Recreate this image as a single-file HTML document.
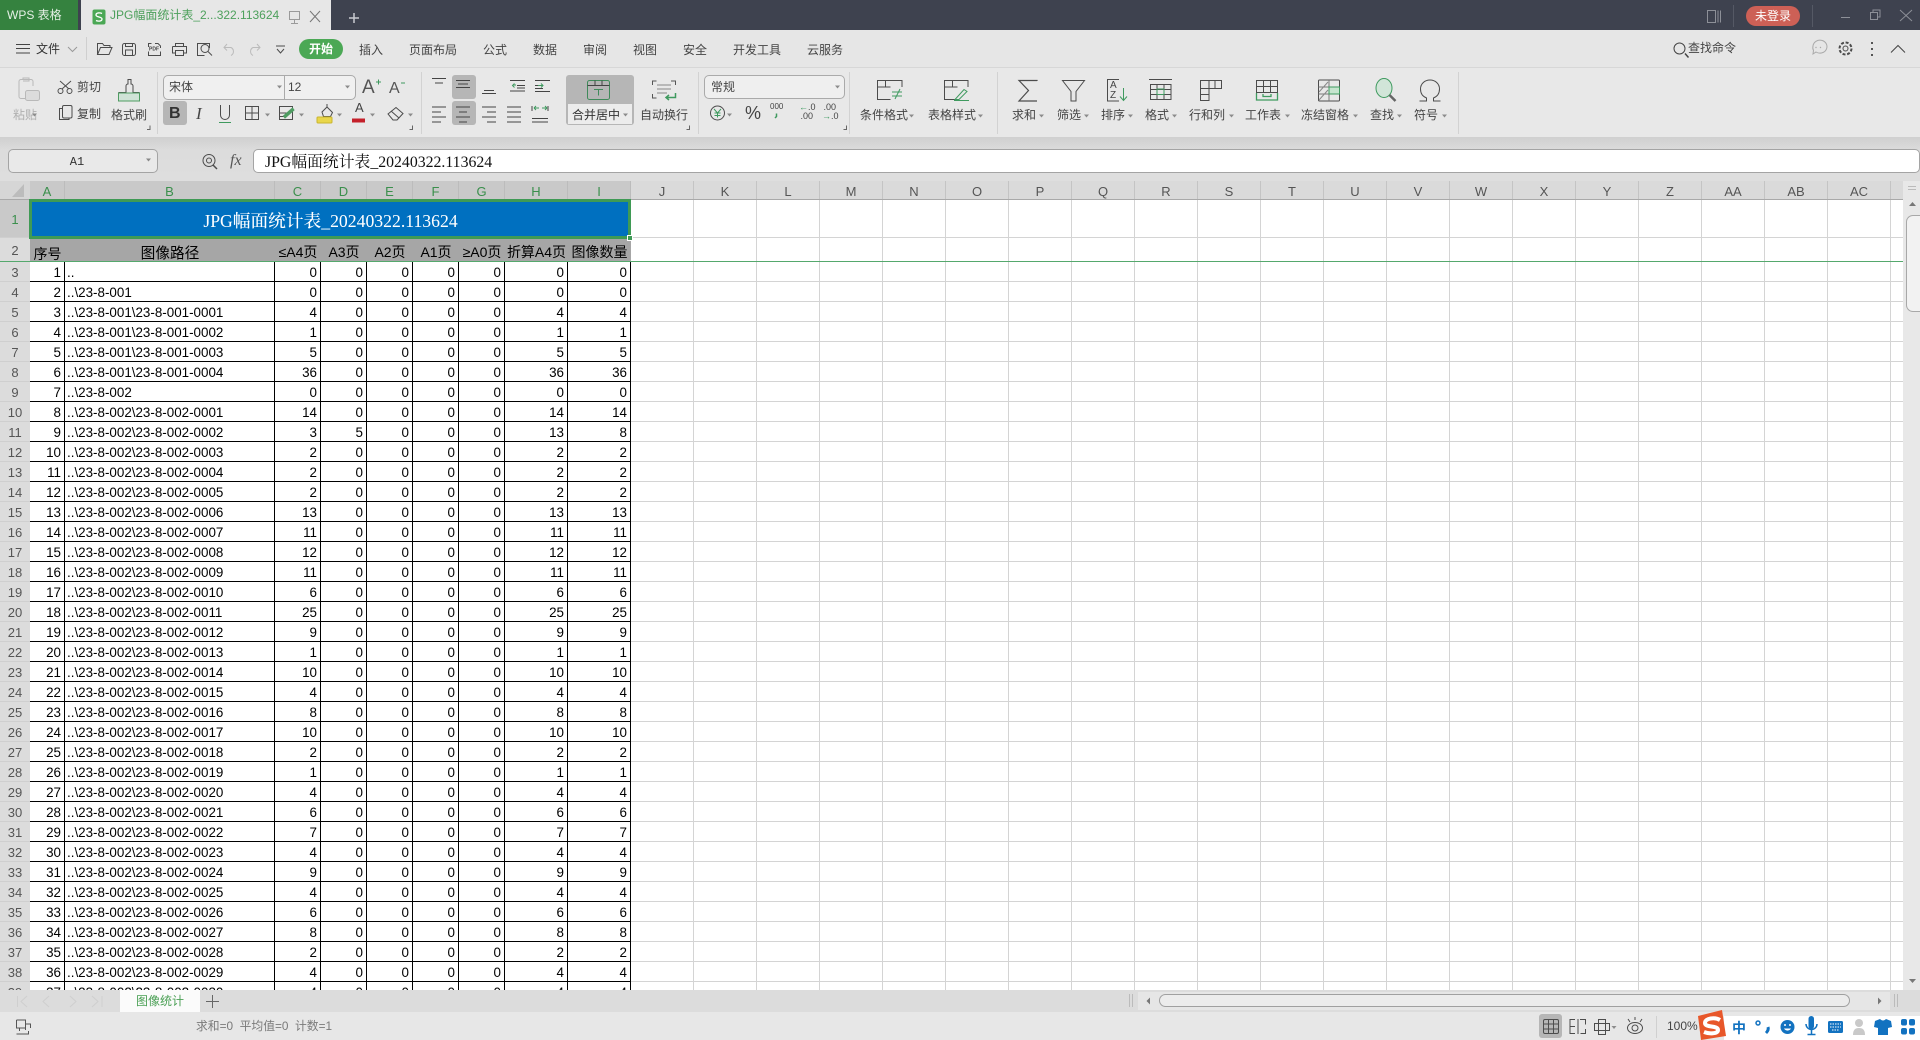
<!DOCTYPE html>
<html lang="zh"><head><meta charset="utf-8"><title>WPS 表格</title>
<style>
html,body{margin:0;padding:0;width:1920px;height:1040px;overflow:hidden;background:#e6e6e6}
body{position:relative;font-family:"Liberation Sans","Noto Sans CJK SC",sans-serif}
div.a,.t{position:absolute}
.t{font-size:12px;line-height:16px;white-space:nowrap;color:#444}
.g{color:#aaa}
svg#ic{position:absolute;left:0;top:0;z-index:20;pointer-events:none}
#sheet{position:absolute;left:0;top:181px;width:1903px;height:809px;overflow:hidden;background:#fff}
#chead{position:absolute;left:30px;top:0;height:18px;display:flex;font-size:13px;line-height:22px;text-align:center;color:#555}
#chead span{display:block;box-sizing:border-box;width:63px;background:#dadada;border-right:1px solid #c4c4c4;height:18px}
#chead span.s{background:#c9c9c9;color:#3a8f4c;border-right:1px solid #bcbcbc}
#rhead{position:absolute;left:0;top:19px;width:30px;font-size:13px;text-align:center;color:#555;background:#dcdcdc}
#rhead div{height:19px;line-height:21px;border-bottom:1px solid #cfcfcf;box-sizing:content-box;overflow:hidden}
table{position:absolute;left:30px;top:81px;border-collapse:separate;border-spacing:0;table-layout:fixed;width:601px;font-size:13.4px;color:#000;background:#fff}
td{box-sizing:content-box;border-right:1px solid #000;border-bottom:1px solid #000;height:16px;line-height:16px;padding:3px 3px 0 0;text-align:right;overflow:hidden;white-space:nowrap}
td:nth-child(2){text-align:left;padding:3px 0 0 2px}
.h{position:absolute;top:57px;height:24px;line-height:29px;text-align:center;font-size:14px;color:#000;white-space:nowrap;overflow:hidden}
</style></head><body>

<!-- title bar -->
<div class="a" style="left:0;top:0;width:1920px;height:37px;background:#3e424f"></div>
<div class="a" style="left:0;top:0;width:78px;height:30px;background:#35823f"></div>
<div class="a" style="left:81px;top:0;width:250px;height:30px;background:#e7e7e7"></div>
<div class="a" style="left:0;top:30px;width:1920px;height:38px;background:#e6e6e6;border-bottom:1px solid #d7d7d7;box-sizing:border-box"></div>
<div class="t" style="left:7px;top:7px;color:#e6f0e6;font-size:12px">WPS 表格</div>
<div class="t" style="left:110px;top:7px;color:#4da05c">JPG幅面统计表_2...322.113624</div>
<div class="a" style="left:1746px;top:6px;width:54px;height:20px;border-radius:10px;background:#cd6056;color:#fff;font-size:12px;line-height:20px;text-align:center">未登录</div>

<!-- menu row -->
<div class="t" style="left:36px;top:41px;font-size:12px;color:#333">文件</div>
<div class="a" style="left:299px;top:39px;width:44px;height:20px;border-radius:10px;background:#4ba855;color:#fff;font-size:12px;line-height:20px;text-align:center;font-weight:bold">开始</div>
<div class="t" style="left:359px;top:42px">插入</div>
<div class="t" style="left:409px;top:42px">页面布局</div>
<div class="t" style="left:483px;top:42px">公式</div>
<div class="t" style="left:533px;top:42px">数据</div>
<div class="t" style="left:583px;top:42px">审阅</div>
<div class="t" style="left:633px;top:42px">视图</div>
<div class="t" style="left:683px;top:42px">安全</div>
<div class="t" style="left:733px;top:42px">开发工具</div>
<div class="t" style="left:807px;top:42px">云服务</div>
<div class="t" style="left:1688px;top:40px">查找命令</div>

<!-- ribbon -->
<div class="a" style="left:0;top:68px;width:1920px;height:69px;background:#e8e8e8"></div>
<div class="a" style="left:0;top:137px;width:1920px;height:44px;background:linear-gradient(#cfcfcf,#dcdcdc 30%,#dedede)"></div>
<!-- comboboxes -->
<div class="a" style="left:163px;top:75px;width:191px;height:23px;border:1px solid #aaa;border-radius:5px;background:#f0f0f0"></div>
<div class="a" style="left:284px;top:75px;width:1px;height:25px;background:#aaa"></div>
<div class="t" style="left:169px;top:79px;color:#444">宋体</div>
<div class="t" style="left:288px;top:79px;color:#444">12</div>
<div class="a" style="left:704px;top:75px;width:139px;height:22px;border:1px solid #aaa;border-radius:5px;background:#efefef"></div>
<div class="t" style="left:711px;top:79px;color:#444">常规</div>
<!-- highlighted buttons -->
<div class="a" style="left:163px;top:101px;width:24px;height:24px;border-radius:3px;background:#b6b6b6"></div>
<div class="a" style="left:452px;top:75px;width:24px;height:24px;border-radius:3px;background:#b6b6b6"></div>
<div class="a" style="left:452px;top:101px;width:24px;height:24px;border-radius:3px;background:#b6b6b6"></div>
<div class="a" style="left:566px;top:75px;width:68px;height:50px;border-radius:3px;background:#b6b6b6"></div>
<div class="a" style="left:568px;top:104px;width:64px;height:20px;background:#ececec"></div>
<div class="t" style="left:13px;top:107px;color:#b0b0b0">粘贴</div>
<div class="t" style="left:77px;top:79px">剪切</div>
<div class="t" style="left:77px;top:106px">复制</div>
<div class="t" style="left:111px;top:107px">格式刷</div>
<div class="t" style="left:169px;top:104px;font-size:16px;line-height:20px;font-weight:bold;color:#333">B</div>
<div class="t" style="left:196px;top:104px;font-family:'Liberation Serif',serif;font-style:italic;font-size:17px;line-height:20px;color:#444">I</div>
<div class="t" style="left:572px;top:107px;color:#333">合并居中</div>
<div class="t" style="left:640px;top:107px">自动换行</div>
<div class="t" style="left:860px;top:107px">条件格式</div>
<div class="t" style="left:928px;top:107px">表格样式</div>
<div class="t" style="left:1012px;top:107px">求和</div>
<div class="t" style="left:1057px;top:107px">筛选</div>
<div class="t" style="left:1101px;top:107px">排序</div>
<div class="t" style="left:1145px;top:107px">格式</div>
<div class="t" style="left:1189px;top:107px">行和列</div>
<div class="t" style="left:1245px;top:107px">工作表</div>
<div class="t" style="left:1301px;top:107px">冻结窗格</div>
<div class="t" style="left:1370px;top:107px">查找</div>
<div class="t" style="left:1414px;top:107px">符号</div>
<div class="t" style="left:362px;top:78px;font-size:19px;line-height:20px;color:#555">A</div>
<div class="t" style="left:389px;top:80px;font-size:16px;line-height:18px;color:#555">A</div>
<div class="t" style="left:355px;top:100px;font-size:13px;color:#444">A</div>
<div class="t" style="left:745px;top:103px;font-size:18px;line-height:20px;color:#444">%</div>
<div class="t" style="left:770px;top:102px;font-size:8px;line-height:10px;color:#444">000</div>
<div class="t" style="left:799px;top:103px;font-size:9px;line-height:9px;color:#444;text-align:right;width:14px"><span style="color:#3f9a5f">←</span>.0<br>.00</div>
<div class="t" style="left:822px;top:103px;font-size:9px;line-height:9px;color:#444;text-align:right;width:14px">.00<br><span style="color:#3f9a5f">→</span>.0</div>
<div class="t" style="left:1110px;top:81px;font-size:10px;line-height:10px;color:#444">A<br>Z</div>

<!-- formula bar -->
<div class="a" style="left:8px;top:149px;width:136px;height:22px;border:1px solid #a4a4a4;border-radius:5px;background:#e9e9e9;font-family:'Liberation Mono','Noto Sans CJK SC',monospace;font-size:12px;line-height:25px;text-align:center;color:#333;padding-right:12px">A1</div>
<div class="a" style="left:253px;top:149px;width:1665px;height:22px;border:1px solid #a4a4a4;border-radius:5px;background:#fff"></div>
<div class="t" style="left:265px;top:154px;font-family:'Liberation Serif','Noto Serif CJK SC',serif;font-size:15.8px;line-height:18px;color:#111">JPG幅面统计表_20240322.113624</div>
<div class="t" style="left:230px;top:152px;font-family:'Liberation Serif',serif;font-style:italic;font-size:16px;line-height:18px;color:#555">fx</div>

<!-- sheet -->
<div id="sheet">
  <div class="a" style="left:0;top:0;width:1903px;height:19px;background:#dadada;border-bottom:1px solid #a9a9a9;box-sizing:border-box"></div>
  <div class="a" style="left:0;top:0;width:30px;height:18px;background:#d6d6d6"></div>
  <div id="chead">
    <span class="s" style="width:35px">A</span><span class="s" style="width:210px">B</span><span class="s" style="width:46px">C</span><span class="s" style="width:46px">D</span><span class="s" style="width:46px">E</span><span class="s" style="width:46px">F</span><span class="s" style="width:46px">G</span><span class="s" style="width:63px">H</span><span class="s" style="width:63px">I</span><span>J</span><span>K</span><span>L</span><span>M</span><span>N</span><span>O</span><span>P</span><span>Q</span><span>R</span><span>S</span><span>T</span><span>U</span><span>V</span><span>W</span><span>X</span><span>Y</span><span>Z</span><span>AA</span><span>AB</span><span>AC</span>
  </div>
  <!-- grid on the right -->
  <div class="a" style="left:631px;top:19px;width:1272px;height:790px;background-image:repeating-linear-gradient(90deg,transparent 0 62px,#d4d4d4 62px 63px)"></div>
  <div class="a" style="left:631px;top:81px;width:1272px;height:728px;background-image:repeating-linear-gradient(180deg,transparent 0 19px,#d4d4d4 19px 20px)"></div>
  <div class="a" style="left:631px;top:56px;width:1272px;height:1px;background:#d4d4d4"></div>
  <!-- row headers -->
  <div id="rhead">
    <div style="height:37px;line-height:40px;background:#c9c9c9;color:#3a8f4c">1</div><div style="height:23px;line-height:26px">2</div><div>3</div><div>4</div><div>5</div><div>6</div><div>7</div><div>8</div><div>9</div><div>10</div><div>11</div><div>12</div><div>13</div><div>14</div><div>15</div><div>16</div><div>17</div><div>18</div><div>19</div><div>20</div><div>21</div><div>22</div><div>23</div><div>24</div><div>25</div><div>26</div><div>27</div><div>28</div><div>29</div><div>30</div><div>31</div><div>32</div><div>33</div><div>34</div><div>35</div><div>36</div><div>37</div><div>38</div><div>39</div>
  </div>
  <!-- title cell and header -->
  <div class="a" style="left:30px;top:19px;width:601px;height:38px;background:#0070c0;color:#fff;font-family:'Liberation Serif','Noto Serif CJK SC',serif;font-size:17.7px;line-height:43px;text-align:center;font-weight:500">JPG幅面统计表_20240322.113624</div>
  <div class="a" style="left:30px;top:57px;width:601px;height:24px;background:#a6a6a6"></div>
  <div class="h" style="left:30px;width:35px;line-height:32px">序号</div>
  <div class="h" style="left:65px;width:210px;font-size:14.67px;line-height:32px">图像路径</div>
  <div class="h" style="left:275px;width:46px">≤A4页</div>
  <div class="h" style="left:321px;width:46px">A3页</div>
  <div class="h" style="left:367px;width:46px">A2页</div>
  <div class="h" style="left:413px;width:46px">A1页</div>
  <div class="h" style="left:459px;width:46px">≥A0页</div>
  <div class="h" style="left:505px;width:63px">折算A4页</div>
  <div class="h" style="left:568px;width:63px">图像数量</div>
  <table>
  <colgroup><col style="width:35px"><col style="width:210px"><col style="width:46px"><col style="width:46px"><col style="width:46px"><col style="width:46px"><col style="width:46px"><col style="width:63px"><col style="width:63px"></colgroup>
  <tr><td>1</td><td>..</td><td>0</td><td>0</td><td>0</td><td>0</td><td>0</td><td>0</td><td>0</td></tr>
  <tr><td>2</td><td>..\23-8-001</td><td>0</td><td>0</td><td>0</td><td>0</td><td>0</td><td>0</td><td>0</td></tr>
  <tr><td>3</td><td>..\23-8-001\23-8-001-0001</td><td>4</td><td>0</td><td>0</td><td>0</td><td>0</td><td>4</td><td>4</td></tr>
  <tr><td>4</td><td>..\23-8-001\23-8-001-0002</td><td>1</td><td>0</td><td>0</td><td>0</td><td>0</td><td>1</td><td>1</td></tr>
  <tr><td>5</td><td>..\23-8-001\23-8-001-0003</td><td>5</td><td>0</td><td>0</td><td>0</td><td>0</td><td>5</td><td>5</td></tr>
  <tr><td>6</td><td>..\23-8-001\23-8-001-0004</td><td>36</td><td>0</td><td>0</td><td>0</td><td>0</td><td>36</td><td>36</td></tr>
  <tr><td>7</td><td>..\23-8-002</td><td>0</td><td>0</td><td>0</td><td>0</td><td>0</td><td>0</td><td>0</td></tr>
  <tr><td>8</td><td>..\23-8-002\23-8-002-0001</td><td>14</td><td>0</td><td>0</td><td>0</td><td>0</td><td>14</td><td>14</td></tr>
  <tr><td>9</td><td>..\23-8-002\23-8-002-0002</td><td>3</td><td>5</td><td>0</td><td>0</td><td>0</td><td>13</td><td>8</td></tr>
  <tr><td>10</td><td>..\23-8-002\23-8-002-0003</td><td>2</td><td>0</td><td>0</td><td>0</td><td>0</td><td>2</td><td>2</td></tr>
  <tr><td>11</td><td>..\23-8-002\23-8-002-0004</td><td>2</td><td>0</td><td>0</td><td>0</td><td>0</td><td>2</td><td>2</td></tr>
  <tr><td>12</td><td>..\23-8-002\23-8-002-0005</td><td>2</td><td>0</td><td>0</td><td>0</td><td>0</td><td>2</td><td>2</td></tr>
  <tr><td>13</td><td>..\23-8-002\23-8-002-0006</td><td>13</td><td>0</td><td>0</td><td>0</td><td>0</td><td>13</td><td>13</td></tr>
  <tr><td>14</td><td>..\23-8-002\23-8-002-0007</td><td>11</td><td>0</td><td>0</td><td>0</td><td>0</td><td>11</td><td>11</td></tr>
  <tr><td>15</td><td>..\23-8-002\23-8-002-0008</td><td>12</td><td>0</td><td>0</td><td>0</td><td>0</td><td>12</td><td>12</td></tr>
  <tr><td>16</td><td>..\23-8-002\23-8-002-0009</td><td>11</td><td>0</td><td>0</td><td>0</td><td>0</td><td>11</td><td>11</td></tr>
  <tr><td>17</td><td>..\23-8-002\23-8-002-0010</td><td>6</td><td>0</td><td>0</td><td>0</td><td>0</td><td>6</td><td>6</td></tr>
  <tr><td>18</td><td>..\23-8-002\23-8-002-0011</td><td>25</td><td>0</td><td>0</td><td>0</td><td>0</td><td>25</td><td>25</td></tr>
  <tr><td>19</td><td>..\23-8-002\23-8-002-0012</td><td>9</td><td>0</td><td>0</td><td>0</td><td>0</td><td>9</td><td>9</td></tr>
  <tr><td>20</td><td>..\23-8-002\23-8-002-0013</td><td>1</td><td>0</td><td>0</td><td>0</td><td>0</td><td>1</td><td>1</td></tr>
  <tr><td>21</td><td>..\23-8-002\23-8-002-0014</td><td>10</td><td>0</td><td>0</td><td>0</td><td>0</td><td>10</td><td>10</td></tr>
  <tr><td>22</td><td>..\23-8-002\23-8-002-0015</td><td>4</td><td>0</td><td>0</td><td>0</td><td>0</td><td>4</td><td>4</td></tr>
  <tr><td>23</td><td>..\23-8-002\23-8-002-0016</td><td>8</td><td>0</td><td>0</td><td>0</td><td>0</td><td>8</td><td>8</td></tr>
  <tr><td>24</td><td>..\23-8-002\23-8-002-0017</td><td>10</td><td>0</td><td>0</td><td>0</td><td>0</td><td>10</td><td>10</td></tr>
  <tr><td>25</td><td>..\23-8-002\23-8-002-0018</td><td>2</td><td>0</td><td>0</td><td>0</td><td>0</td><td>2</td><td>2</td></tr>
  <tr><td>26</td><td>..\23-8-002\23-8-002-0019</td><td>1</td><td>0</td><td>0</td><td>0</td><td>0</td><td>1</td><td>1</td></tr>
  <tr><td>27</td><td>..\23-8-002\23-8-002-0020</td><td>4</td><td>0</td><td>0</td><td>0</td><td>0</td><td>4</td><td>4</td></tr>
  <tr><td>28</td><td>..\23-8-002\23-8-002-0021</td><td>6</td><td>0</td><td>0</td><td>0</td><td>0</td><td>6</td><td>6</td></tr>
  <tr><td>29</td><td>..\23-8-002\23-8-002-0022</td><td>7</td><td>0</td><td>0</td><td>0</td><td>0</td><td>7</td><td>7</td></tr>
  <tr><td>30</td><td>..\23-8-002\23-8-002-0023</td><td>4</td><td>0</td><td>0</td><td>0</td><td>0</td><td>4</td><td>4</td></tr>
  <tr><td>31</td><td>..\23-8-002\23-8-002-0024</td><td>9</td><td>0</td><td>0</td><td>0</td><td>0</td><td>9</td><td>9</td></tr>
  <tr><td>32</td><td>..\23-8-002\23-8-002-0025</td><td>4</td><td>0</td><td>0</td><td>0</td><td>0</td><td>4</td><td>4</td></tr>
  <tr><td>33</td><td>..\23-8-002\23-8-002-0026</td><td>6</td><td>0</td><td>0</td><td>0</td><td>0</td><td>6</td><td>6</td></tr>
  <tr><td>34</td><td>..\23-8-002\23-8-002-0027</td><td>8</td><td>0</td><td>0</td><td>0</td><td>0</td><td>8</td><td>8</td></tr>
  <tr><td>35</td><td>..\23-8-002\23-8-002-0028</td><td>2</td><td>0</td><td>0</td><td>0</td><td>0</td><td>2</td><td>2</td></tr>
  <tr><td>36</td><td>..\23-8-002\23-8-002-0029</td><td>4</td><td>0</td><td>0</td><td>0</td><td>0</td><td>4</td><td>4</td></tr>
  <tr><td>37</td><td>..\23-8-002\23-8-002-0030</td><td>4</td><td>0</td><td>0</td><td>0</td><td>0</td><td>4</td><td>4</td></tr>
  </table>
  <!-- freeze line -->
  <div class="a" style="left:0;top:80px;width:1903px;height:1px;background:#55a86d;z-index:3"></div>
  <!-- selection -->
  <div class="a" style="left:29px;top:18px;width:596px;height:34px;border:3px solid #3f9a55"></div>
  <div class="a" style="left:627px;top:54px;width:6px;height:6px;background:#3f9a55;border:1px solid #fff;box-sizing:border-box"></div>
</div>

<!-- vertical scrollbar -->
<div class="a" style="left:1903px;top:181px;width:17px;height:809px;background:#e8e8e8"></div>
<div class="a" style="left:1906px;top:215px;width:14px;height:97px;background:#f2f2f2;border:1px solid #a8a8a8;border-right:0;border-radius:7px 0 0 7px;box-sizing:border-box"></div>

<!-- tabs and status -->
<div class="a" style="left:0;top:990px;width:1920px;height:22px;background:#dcdcdc"></div>
<div class="a" style="left:120px;top:990px;width:80px;height:22px;background:#fbfbfb;color:#4ba055;font-size:12px;line-height:23px;text-align:center">图像统计</div>
<div class="a" style="left:1138px;top:992px;width:752px;height:18px;background:#e6e6e6"></div>
<div class="a" style="left:1159px;top:994px;width:691px;height:13px;background:#ececec;border:1px solid #a0a0a0;border-radius:7px;box-sizing:border-box"></div>
<div class="a" style="left:0;top:1012px;width:1920px;height:28px;background:#e7e7e7"></div>
<div class="t" style="left:196px;top:1018px;color:#7a7a7a;font-size:11.8px">求和=0&nbsp; 平均值=0&nbsp; 计数=1</div>
<div class="a" style="left:1539px;top:1014px;width:23px;height:24px;border-radius:3px;background:#b6b6b6"></div>
<div class="t" style="left:1667px;top:1018px;color:#444;font-size:12px">100%</div>
<div class="a" style="left:1724px;top:1016px;width:196px;height:24px;background:#fff;z-index:5"></div>
<div class="t" style="left:1732px;top:1018px;color:#1272c0;font-size:14px;font-weight:bold;z-index:6;line-height:20px">中</div>

<svg id="ic" width="1920" height="1040" viewBox="0 0 1920 1040" fill="none" stroke="#4c4c4c" stroke-width="1">
<!-- title bar icons -->
<g>
<rect x="92.5" y="9.5" width="13" height="15" rx="2" fill="#4ba855" stroke="none"/>
<path d="M102 13.500c-2-1-6-1-6 1.500 0 2.500 6 1.500 6 4 0 2.500-4 2.500-6 1.500" stroke="#fff" stroke-width="1.300"/>
<path d="M289.5 11.5h10v8h-10zM294.5 19.5v4M291 23.5h7" stroke="#9a9a9a"/>
<path d="M310 11l10 11M320 11l-10 11" stroke="#777"/>
<path d="M354 13v10M349 18h10" stroke="#c9cad0" stroke-width="1.5"/>
<g stroke="#8d9098"><path d="M1707.5 10.5h8v12h-8zM1718 10.5v12M1720.5 10.5v12"/><path d="M1733.5 5v22M1812.5 5v22" stroke="#555965"/><path d="M1841 17.5h9"/><path d="M1870.5 12.5h7v7h-7zM1873 12.5v-2.5h7v7h-2.5"/><path d="M1900 10l12 11M1912 10l-12 11"/></g>
</g>
<!-- menu row icons -->
<path d="M16 44.5h14M16 48.5h14M16 53h14" stroke="#444"/>
<path d="M68 47l4.5 4.5L77 47" stroke="#999"/>
<path d="M86.5 37v23" stroke="#cfcfcf"/>
<path d="M97.5 54.5V43.5h5l1.5 2h6v2M97.5 54.5h11.5l3-7h-11.500z"/>
<path d="M122.500 45.500a2 2 0 0 1 2-2h9a2 2 0 0 1 2 2v8a2 2 0 0 1-2 2h-9a2 2 0 0 1-2-2zM125.500 43.500v3h7v-3M125.500 55.500v-5.500h7v5.500"/>
<path d="M148.500 47v-3.500h3M155 43.500h3l2.500 2.500v2M148.500 51.500v4h12v-4"/>
<text x="149" y="50.500" font-size="5" font-weight="bold" fill="#444" stroke="none" font-family="Liberation Sans">PDF</text>
<path d="M175.500 47v-3.500h8V47M172.500 46.500h14v6.500h-3M172.500 46.500v6.500h3M175.500 50.500h8v5h-8z"/>
<path d="M209.500 48v-4.500h-12v12h7"/><circle cx="205" cy="48.500" r="4"/><path d="M208 51.500l4 4"/>
<path d="M227 44l-3 3.500 3 3M224 47.500h7a4.500 4.500 0 0 1 0 8" stroke="#bbb"/>
<path d="M257 44l3 3.500-3 3M260 47.500h-7a4.500 4.500 0 0 0 0 8" stroke="#bbb"/>
<path d="M276 46h9M277 49l3.500 4 3.500-4"/>
<path d="M1685 53.500l3.500 4" stroke="#444" stroke-width="1.500"/><circle cx="1679.500" cy="48.500" r="5.500" stroke="#444"/>
<path d="M1813 46a7 6.500 0 1 1 3 6l-3 2 .5-3.500a6 6 0 0 1-.5-4.500z" stroke="#aaa"/><circle cx="1816" cy="47.500" r=".7" fill="#aaa" stroke="none"/><circle cx="1820.500" cy="47.500" r=".7" fill="#aaa" stroke="none"/>
<circle cx="1845.500" cy="48.500" r="2.500"/><circle cx="1845.500" cy="48.500" r="6" stroke-width="2" stroke-dasharray="3 1.700"/>
<path d="M1872 42v2M1872 48v2M1872 54v2" stroke-width="1.800" stroke="#444"/>
<path d="M1891 52.500l7-7 7 7" stroke="#444"/>
<!-- clipboard group -->
<g stroke="#b9b9b9"><path d="M33 86v-4.500a2 2 0 0 0-2-2H21a2 2 0 0 0-2 2v15a2 2 0 0 0 2 2h4"/><path d="M23 79.500v-1.500h6v3h-6"/><rect x="25.500" y="90.500" width="14" height="10" rx="2" fill="#dcdcdc"/></g>
<path d="M60 81l9 8M71 81l-9 8"/><circle cx="60.500" cy="91" r="2.500"/><circle cx="69.500" cy="91" r="2.500"/>
<rect x="62.500" y="105.500" width="9.500" height="12.500" rx="1.500"/><path d="M62.500 108.500h-3v11h9.500v-2"/>
<path d="M118.500 92.500h7.500v-6.500a2 2 0 0 1 2-2v-4.500h3v4.500a2 2 0 0 1 2 2v6.500h6.500"/>
<rect x="118.500" y="93" width="21" height="8" fill="#cfe3d6" stroke="#4f9c62"/>
<path d="M150 125.500v4h-3M412.500 125.500v4h-3M689.500 125.500v4h-3M846.500 125.500v4h-3" stroke="#666"/>
<path d="M157.500 72v62M421.500 72v62M698.500 72v62M849.500 72v62M997.500 72v62M1458.500 72v62" stroke="#d2d2d2"/>
<!-- font -->
<path d="M277 85.500h5l-2.500 3zM345 85.500h5l-2.500 3zM835 85.500h5l-2.500 3zM32 113.500h5l-2.500 3zM265 113.500h5l-2.500 3zM299 113.500h5l-2.500 3zM337 113.500h5l-2.500 3zM370 113.500h5l-2.500 3zM408 113.500h5l-2.500 3zM623 113.500h5l-2.500 3zM727 113.500h5l-2.500 3zM909 114.500h5l-2.500 3zM978 114.500h5l-2.500 3zM1039 114.500h5l-2.500 3zM1084 114.500h5l-2.500 3zM1128 114.500h5l-2.500 3zM1172 114.500h5l-2.500 3zM1229 114.500h5l-2.500 3zM1285 114.500h5l-2.500 3zM1353 114.500h5l-2.500 3zM1397 114.500h5l-2.500 3zM1442 114.500h5l-2.500 3z" fill="#8c8c8c" stroke="none"/>
<path d="M376 82h5M378.500 79.500v5" stroke="#3f9a5f"/><path d="M401 83h4" stroke="#3f9a5f"/>
<path d="M220.500 105v10a4.500 4.500 0 0 0 9 0v-10"/><path d="M219 122.500h12" stroke="#3f9a5f"/>
<rect x="245.500" y="106.500" width="13" height="13"/><path d="M252 106.500v13M245.500 113h13"/>
<rect x="279.500" y="106.500" width="13" height="13"/><path d="M279.500 113h10M279.500 116.500h6"/><path d="M285 118l9-8-1.500-2-9 8z" fill="#4f9c62" stroke="#4f9c62"/>
<path d="M322 112l5-5 5.500 5.500-2 4h-7z"/><rect x="317" y="117" width="15" height="6" fill="#e9d64a" stroke="#c9b530" rx="1"/><path d="M327 104v3"/>
<rect x="352" y="118.500" width="13" height="4" fill="#c4202a" stroke="none"/>
<path d="M388 114l8-6.500 7 6-6 6.500h-4z"/><path d="M391 111l8 7"/>
<!-- align -->
<g stroke="#444">
<path d="M432 78.500h14M435 83h8"/>
<path d="M456 84.500h14M458 88h10M456 91.500h14" transform="translate(0 -4)"/>
<path d="M486 91.500h10M484 94.500h14" transform="translate(-2 -1)"/>
<path d="M510 80.500h15M517 85.500h8M510 91h15M517 88h8"/>
<path d="M535 80.500h15M535 85.500h8M535 88.500h8M535 91.500h15"/>
<path d="M432 107h14M432 112h9M432 117h14M432 122h9"/>
<path d="M456 107h14M459 112h8M456 117h14M459 122h8"/>
<path d="M482 107h14M487 112h9M482 117h14M487 122h9"/>
<path d="M507 107h14M507 112h14M507 117h14M507 122h14"/>
<path d="M532 122h16M532 118.500h16M532 106v5M548 106v5"/>
</g>
<path d="M516 85l-3 0M514.500 83.500l-2 2 2 2M538 85.500h5M541 83.500l2 2-2 2M534 108h5M534 108l2-2M534 108l2 2M547 108h-5M547 108l-2-2M547 108l-2 2" stroke="#3f9a5f"/>
<!-- merge -->
<rect x="587.500" y="80.500" width="22" height="19" rx="2" stroke="#3f8a5a"/><path d="M587.500 85.500h22M595 80.500v5M602 80.500v5" stroke="#444"/><path d="M594 89.500h9M598.500 89.500v6" stroke="#3f8a5a"/>
<!-- wrap -->
<path d="M652.500 85v-4h4M671 81h4.500v4M652.500 94v4h4" stroke="#555"/><path d="M657 85h14M657 89h14M657 93h10" stroke="#888"/>
<path d="M675.500 93v4.500h-9M669 95l-3 2.500 3 2.500" stroke="#3f9a5f" stroke-width="1.500"/>
<!-- number -->
<circle cx="717.500" cy="113" r="7"/><path d="M714 109l3.500 4 3.500-4M717.500 113v4.500M714.500 113h6M714.500 115.500h6" stroke="#3f9a5f"/>
<path d="M776.500 113.500v3l-1.500 1.500" stroke="#3f9a5f" stroke-width="1.500"/>
<!-- conditional -->
<path d="M902 87v-6.500h-24.500v19h13M877.500 87h13M885.500 80.500v6.500"/><path d="M892 92h10M892 96h10M900 89l-5 10" stroke="#3f9a5f"/>
<path d="M968 87v-6.500h-23.500v19h13M944.500 87h13M952.500 80.500v6.500"/><path d="M955 99.500l9-10 3 2-8 8zM954 100.500h15" stroke="#3f9a5f"/>
<!-- sum -->
<path d="M1037 81v-.5h-18l9.500 10-9.500 10.500h18" stroke-width="1.200"/>
<path d="M1062.500 80.500h22l-8.500 11v9.500h-5v-9.500z"/>
<path d="M1119 79.500h-11.500v21.500h11.500"/><path d="M1123.500 88v12M1120 96.500l3.500 4 3.500-4" stroke="#3f9a5f"/>
<path d="M1149 79.500h23M1150.500 84.500h20.500v15h-20.500zM1150.500 89.500h20.500M1150.500 94.500h20.500M1157 84.500v15M1164 84.500v15"/><rect x="1157" y="89" width="7" height="5.500" stroke="#3f9a5f"/>
<path d="M1200.500 80.500h21v8h-12.500v12h-8.500zM1200.500 88.500h8.500M1200.500 94.500h8.500M1209 80.500v8M1215 80.500v8"/>
<path d="M1256.500 80.500h21v12h-21zM1256.500 86.500h21M1263.500 80.500v12M1270.500 80.500v12"/><path d="M1256.500 93v7h21v-7M1263 94v2.500h8V94" stroke="#3f9a5f" stroke-width="1.300"/>
<rect x="1318.500" y="80" width="21" height="21" rx="1"/><path d="M1318.500 87h21M1318.500 94h21M1329 80v21" stroke="#777"/><rect x="1329" y="87" width="10.500" height="7" fill="#c6e5cf" stroke="#3f9a5f"/><path d="M1319 92l9-10M1319 100l9-10" stroke="#888"/>
<ellipse cx="1384" cy="88" rx="8" ry="9.500" fill="#d1e5d8" stroke="#3f9a5f"/><path d="M1389.500 95l6 6" stroke="#666" stroke-width="2.500"/>
<path d="M1419.500 101h7v-3c-5-2-6-6-6-9 0-5 4-9 9.500-9s9.500 4 9.500 9c0 3-1 7-6 9v3h7"/>
<!-- formula icons -->
<circle cx="209" cy="160.500" r="6"/><circle cx="209" cy="160.500" r="2.500"/><path d="M213 165l4 4" stroke-width="1.500"/>
<path d="M146 158.500h5l-2.500 3z" fill="#888" stroke="none"/>
<!-- corner -->
<path d="M24 184v13H12z" fill="#bcbcbc" stroke="none"/>
<!-- vscroll -->
<path d="M1908 186.500h8M1908 189.500h8" stroke="#bbb"/>
<path d="M1909 206h7l-3.500-4z" fill="#777" stroke="none"/>
<path d="M1909 979h7l-3.500 4z" fill="#777" stroke="none"/>
<!-- hscroll -->
<path d="M1129.500 994v13M1132.500 994v13M1894.500 994v13M1897.500 994v13" stroke="#bbb"/>
<path d="M1150 997.500v7l-3.500-3.500z" fill="#777" stroke="none"/>
<path d="M1878 997.500v7l3.500-3.500z" fill="#777" stroke="none"/>
<!-- sheet nav -->
<path d="M17.500 996v11M27 996l-6 5.500 6 5.500M49 996l-6 5.500 6 5.500M70 996l6 5.500-6 5.500M92 996l6 5.500-6 5.500M102 996v11" stroke="#cfcfcf"/>
<path d="M212.500 995v13M206 1001.500h13" stroke="#666"/>
<path d="M16.500 1020h9v10M25.500 1024h5v4M16.500 1020v8h9M16.500 1034h12v-3M19.500 1028v3" stroke="#555"/>
<!-- status icons -->
<rect x="1543.500" y="1019.500" width="15" height="14" rx="1.500"/><path d="M1543.500 1024h15M1543.500 1029h15M1548.500 1019.500v14M1553.500 1019.500v14"/>
<path d="M1575 1019.500h-5v14h5M1570 1026.500h5M1580 1019.500h5.500v5M1585.500 1029v4.500h-5M1578 1019v15"/>
<rect x="1594.500" y="1023.500" width="15" height="7"/><rect x="1598.500" y="1019.500" width="7" height="15"/>
<path d="M1611.500 1026h5l-2.500 3z" fill="#8c8c8c" stroke="none"/>
<ellipse cx="1635" cy="1028" rx="7.500" ry="5.500"/><circle cx="1635" cy="1028" r="3"/><path d="M1635 1017v3M1628 1019l2 3M1642 1019l-2 3"/>
<path d="M1656.500 1016v22" stroke="#d0d0d0"/>
<!-- sogou bar -->
<path d="M1698 1016l24-6 4 26-25 4z" fill="#e8572a" stroke="none"/>
<path d="M1720 1020c-5-3-15-2-15 3 0 5 13 2 13 7 0 4-9 4-14 2" stroke="#fff" stroke-width="4"/>
<path d="M1758 1021a2 2 0 1 0 .01 0z" stroke="#1272c0" stroke-width="1.500"/>
<path d="M1768 1027c1 3-1 5-2 6" stroke="#1272c0" stroke-width="3"/>
<circle cx="1787.500" cy="1027" r="7" fill="#1272c0" stroke="none"/>
<circle cx="1785" cy="1025" r="1" fill="#fff" stroke="none"/><circle cx="1790" cy="1025" r="1" fill="#fff" stroke="none"/>
<path d="M1784 1028.500a4 4 0 0 0 7 0z" fill="#fff" stroke="none"/>
<rect x="1808.500" y="1016" width="5.500" height="13" rx="2.700" fill="#1272c0" stroke="none"/>
<path d="M1806 1024a5 5 0 0 0 11 0M1811.500 1029v5M1807.500 1034.500h8" stroke="#1272c0" stroke-width="1.500"/>
<rect x="1828" y="1021" width="15" height="12" rx="1.500" fill="#1272c0" stroke="none"/>
<path d="M1830 1024h11M1830 1027h11M1832 1030h7" stroke="#fff" stroke-dasharray="1.500 1"/>
<circle cx="1859" cy="1023" r="4" fill="#c9c9c9" stroke="none"/><path d="M1853 1035c0-5 2-7 6-7s6 2 6 7z" fill="#c9c9c9" stroke="none"/>
<path d="M1875 1021l5-2c2 2 4 2 6 0l5 2 1 6-4 1v7h-10v-7l-4-1z" fill="#1272c0" stroke="none"/>
<g fill="#1272c0" stroke="none"><rect x="1901" y="1019" width="6" height="6.500" rx="2"/><rect x="1909" y="1019" width="6" height="6.500" rx="2"/><rect x="1901" y="1028" width="6" height="6.500" rx="2"/><rect x="1909" y="1028" width="6" height="6.500" rx="2"/></g>
</svg>
</body></html>
